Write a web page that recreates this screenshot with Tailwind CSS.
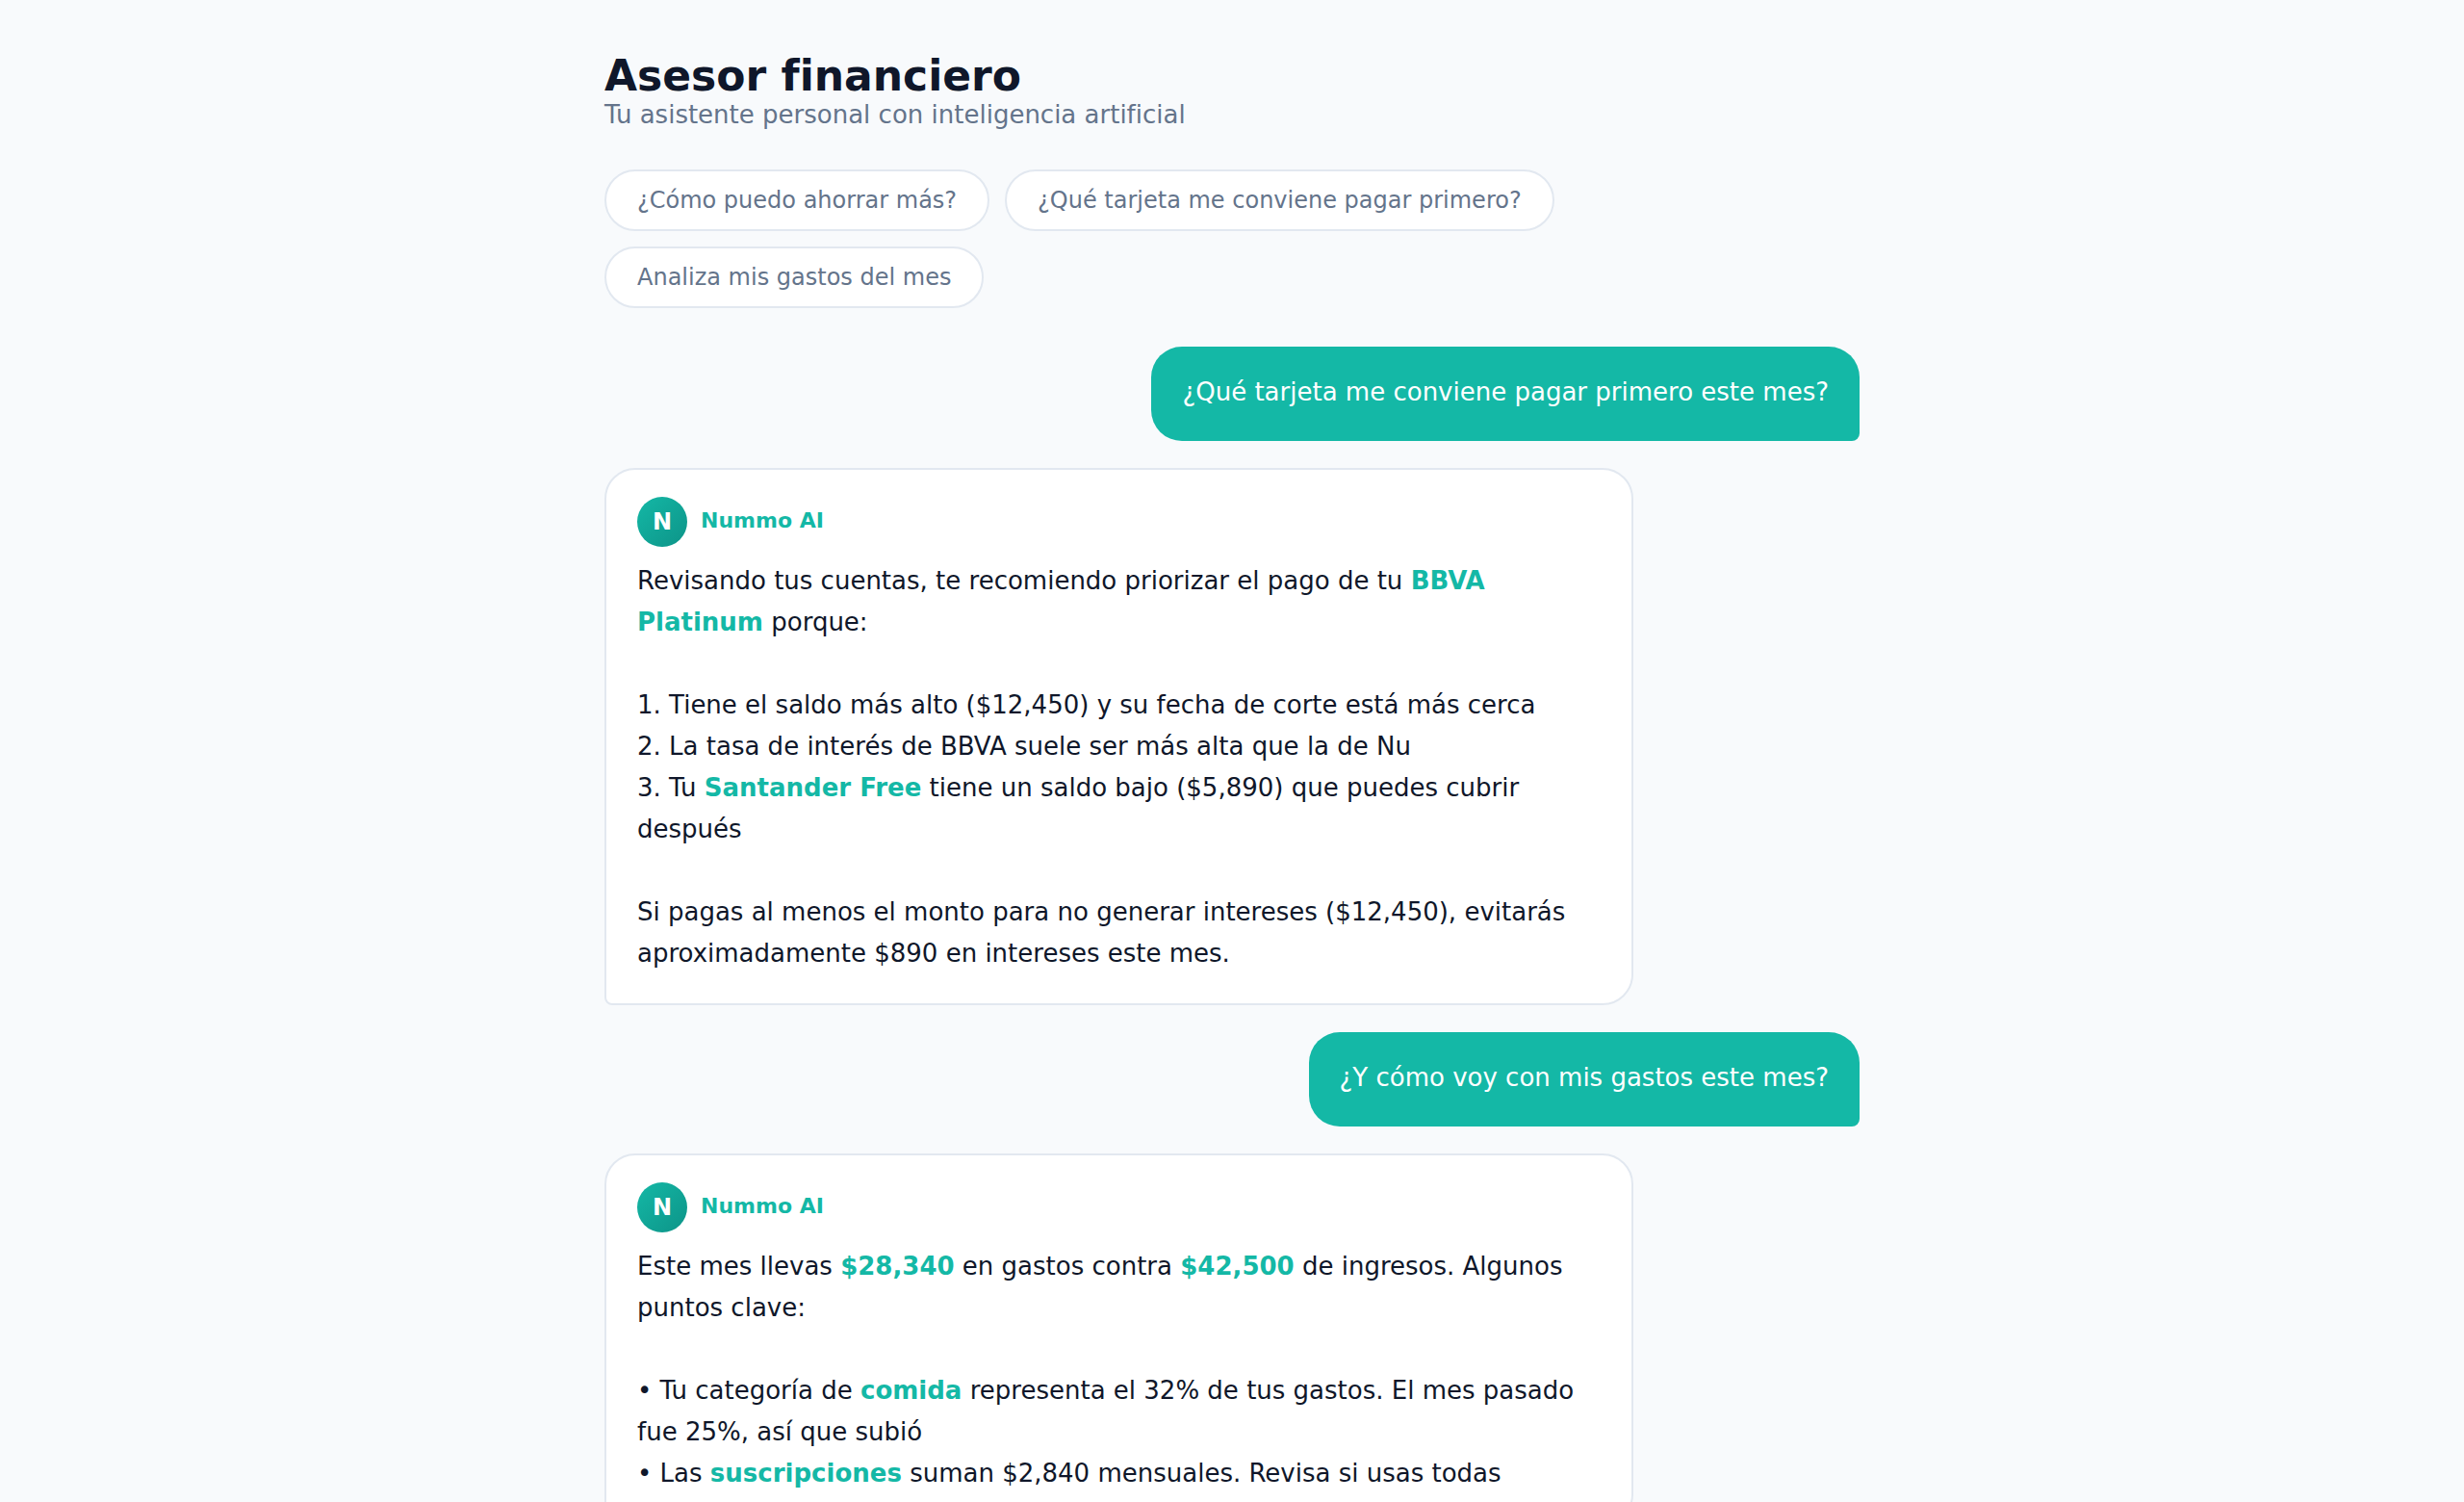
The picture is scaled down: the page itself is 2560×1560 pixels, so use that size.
<!DOCTYPE html>
<html lang="es">
<head>
<meta charset="utf-8">
<meta name="viewport" content="width=device-width, initial-scale=1">
<title>Asesor financiero</title>
<script src="https://cdn.jsdelivr.net/npm/@tailwindcss/browser@4"></script>
</head>
<body class="h-screen overflow-hidden bg-slate-50 font-['DejaVu_Sans',sans-serif] text-[26px] text-[#0f172a]">
<main class="mx-auto flex max-w-[1400px] flex-col px-12 pt-[54px] pb-12">
  <header>
    <h1 class="text-[44px] leading-[50px] font-bold">Asesor financiero</h1>
    <p class="leading-[30px] text-[#64748b]">Tu asistente personal con inteligencia artificial</p>
  </header>

  <div class="mt-[42px] flex flex-wrap gap-4">
    <button type="button" class="h-16 rounded-full border-2 border-[#e2e8f0] bg-white px-8 text-2xl leading-7 text-[#64748b]">¿Cómo puedo ahorrar más?</button>
    <button type="button" class="h-16 rounded-full border-2 border-[#e2e8f0] bg-white px-8 text-2xl leading-7 text-[#64748b]">¿Qué tarjeta me conviene pagar primero?</button>
    <button type="button" class="h-16 rounded-full border-2 border-[#e2e8f0] bg-white px-8 text-2xl leading-7 text-[#64748b]">Analiza mis gastos del mes</button>
  </div>

  <section class="mt-10 flex flex-col gap-7 leading-[43px]" aria-label="Conversación">
    <p class="max-w-[82%] self-end rounded-[32px] rounded-br-lg bg-[#14b8a6] px-8 pt-[26px] pb-[29px] text-white">¿Qué tarjeta me conviene pagar primero este mes?</p>

    <article class="w-[82%] self-start rounded-[32px] rounded-bl-lg border-2 border-[#e2e8f0] bg-white px-8 pt-7 pb-[30px]">
      <div class="mb-[14px] flex items-center gap-[14px]">
        <span class="flex size-[52px] items-center justify-center rounded-full bg-linear-135 from-[#14b8a6] to-[#0d9488] text-[24px] leading-7 font-bold text-white">N</span>
        <span class="pb-0.5 text-[22px] leading-7 font-bold text-[#14b8a6]">Nummo AI</span>
      </div>
      <p>Revisando tus cuentas, te recomiendo priorizar el pago de tu <strong class="font-bold text-[#14b8a6]">BBVA Platinum</strong> porque:<br><br>1. Tiene el saldo más alto ($12,450) y su fecha de corte está más cerca<br>2. La tasa de interés de BBVA suele ser más alta que la de Nu<br>3. Tu <strong class="font-bold text-[#14b8a6]">Santander Free</strong> tiene un saldo bajo ($5,890) que puedes cubrir después<br><br>Si pagas al menos el monto para no generar intereses ($12,450), evitarás aproximadamente $890 en intereses este mes.</p>
    </article>

    <p class="max-w-[82%] self-end rounded-[32px] rounded-br-lg bg-[#14b8a6] px-8 pt-[26px] pb-[29px] text-white">¿Y cómo voy con mis gastos este mes?</p>

    <article class="w-[82%] self-start rounded-[32px] rounded-bl-lg border-2 border-[#e2e8f0] bg-white px-8 pt-7 pb-[30px]">
      <div class="mb-[14px] flex items-center gap-[14px]">
        <span class="flex size-[52px] items-center justify-center rounded-full bg-linear-135 from-[#14b8a6] to-[#0d9488] text-[24px] leading-7 font-bold text-white">N</span>
        <span class="pb-0.5 text-[22px] leading-7 font-bold text-[#14b8a6]">Nummo AI</span>
      </div>
      <p>Este mes llevas <strong class="font-bold text-[#14b8a6]">$28,340</strong> en gastos contra <strong class="font-bold text-[#14b8a6]">$42,500</strong> de ingresos. Algunos puntos clave:<br><br>• Tu categoría de <strong class="font-bold text-[#14b8a6]">comida</strong> representa el 32% de tus gastos. El mes pasado fue 25%, así que subió<br>• Las <strong class="font-bold text-[#14b8a6]">suscripciones</strong> suman $2,840 mensuales. Revisa si usas todas</p>
    </article>
  </section>
</main>
</body>
</html>
